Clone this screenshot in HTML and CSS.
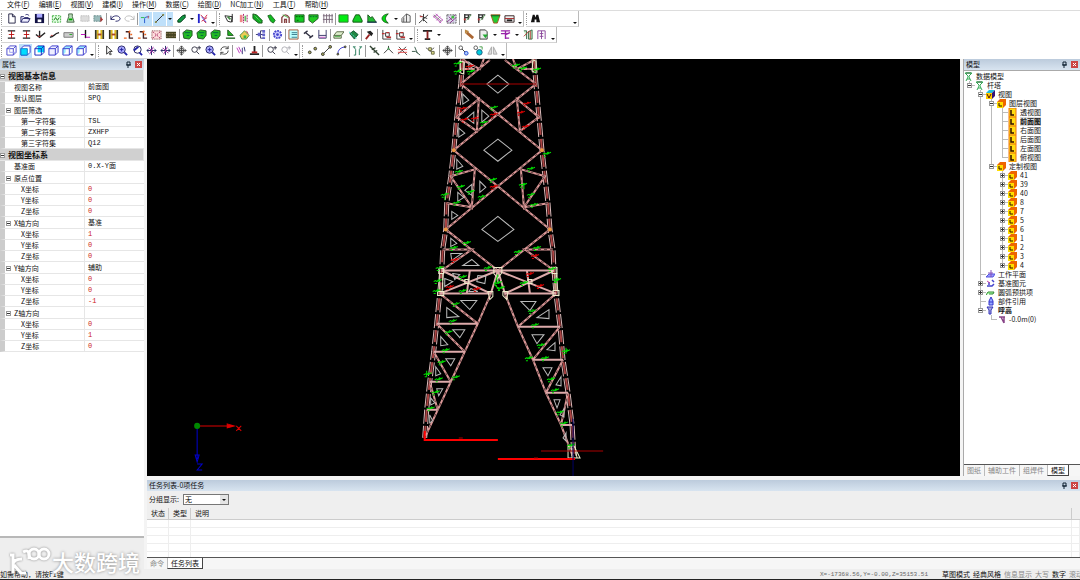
FILE: index.html
```html
<!DOCTYPE html>
<html lang="zh-CN">
<head>
  <meta charset="utf-8">
  <meta name="viewport" content="width=device-width, initial-scale=1.0">
  <title>杆塔 - 前面图</title>
  <link rel="stylesheet" href="styles.css">
</head>
<body>
  <!-- Icon sprite -->
  <svg class="sprite" aria-hidden="true">
    <symbol id="new" viewBox="0 0 12 12"><path d="M3 1h4l3 3v7H3zM7 1v3h3" fill="#fff" stroke="#224" /></symbol>
    <symbol id="open" viewBox="0 0 12 12"><path d="M1 10V4h3l1 1h4v2M1 10l2-4h8l-2 4zM6 2c2-1 3 0 4 1" fill="#eef" stroke="#226" /></symbol>
    <symbol id="save" viewBox="0 0 12 12"><path d="M1 1h10v10H1z" fill="#114" /><path d="M3 1h6v4H3z" fill="#aaf" /><path d="M4 7h4v3H4z" fill="#fff" /></symbol>
    <symbol id="mail" viewBox="0 0 12 12"><path d="M1.500 3h9v7h-9z" fill="#e4ffe4" stroke="#3a3" stroke-dasharray="2 1" /><path d="M3 8l2-3 2 3 2-3" fill="none" stroke="#171" /></symbol>
    <symbol id="weight" viewBox="0 0 12 12"><path d="M4 1h4v3l2 6H2l2-6z" fill="#bdb" stroke="#464" /><path d="M4 7h4" stroke="#0a0" stroke-width="2" /></symbol>
    <symbol id="greybox" viewBox="0 0 12 12"><path d="M2 3h9v6H2z" fill="#ddd" stroke="#aaa" stroke-dasharray="1 1" /></symbol>
    <symbol id="export" viewBox="0 0 12 12"><path d="M1 3h8v6H1z" fill="#9bb" stroke="#688" stroke-dasharray="2 1" /><path d="M8 4l3 3-3 3z" fill="#a33" /></symbol>
    <symbol id="undo" viewBox="0 0 12 12"><path d="M1 3v4h4M1 7c2-5 9-5 10-1 0 2-2 3-5 3" fill="none" stroke="#226" /></symbol>
    <symbol id="redo" viewBox="0 0 12 12"><path d="M11 3v4H7M11 7C9 2 2 2 1 6c0 2 2 3 5 3" fill="none" stroke="#bbb" /></symbol>
    <symbol id="curve" viewBox="0 0 12 12"><path d="M5 11V6q0-2 5-2" fill="none" stroke="#25c" /><path d="M1 5h4" stroke="#2b4" /><path d="M9 3v3" stroke="#c55" /></symbol>
    <symbol id="line" viewBox="0 0 12 12"><path d="M2 10l8-8" stroke="#222" /><path d="M1 9h2v2H1zM9 1h2v2H9z" fill="#884" /></symbol>
    <symbol id="plate" viewBox="0 0 12 12"><path d="M2 8l5-5 3-1v3L5 10H2z" fill="#194" stroke="#031" /></symbol>
    <symbol id="flag" viewBox="0 0 12 12"><path d="M2 1v10" stroke="#22c" stroke-width="2" /><path d="M4 2l4 4 3-4M5 9l6-4M7 8l3 3" fill="none" stroke="#c24" /><path d="M5 4l5 6" stroke="#44d" /></symbol>
    <symbol id="loop" viewBox="0 0 12 12"><path d="M1 3l8 1-1 6-4-1zM9 1v9" fill="none" stroke="#222" /><path d="M4 4l3 3" stroke="#484" stroke-width="2" /></symbol>
    <symbol id="mirror" viewBox="0 0 12 12"><path d="M2 2h3v8H2z" fill="#e88" /><path d="M6 1v10M10 2v8" stroke="#a16" stroke-dasharray="2 1" /><path d="M7 3h2v6H7z" fill="#6b6" /></symbol>
    <symbol id="greenbar" viewBox="0 0 12 12"><path d="M1 1l4 1 6 6v3H7L1 6z" fill="#1a2" stroke="#252" /><path d="M3 3l6 6" stroke="#9e9" stroke-dasharray="1 1" /></symbol>
    <symbol id="greenbolt" viewBox="0 0 12 12"><path d="M2 3l3-1 5 6-2 3-3-2z" fill="#1b2" stroke="#262" /></symbol>
    <symbol id="arch" viewBox="0 0 12 12"><path d="M2 11V5q4-6 8 0v6M5 11V7h2v4" fill="none" stroke="#844" stroke-width="1.500" /><path d="M3 2l6 3" stroke="#4b4" /></symbol>
    <symbol id="greenbox" viewBox="0 0 12 12"><path d="M1 2h10v8H1z" fill="#1c2" stroke="#252" /><path d="M2 4h8M3 8h2" stroke="#050" stroke-dasharray="2 1" /></symbol>
    <symbol id="greenshield" viewBox="0 0 12 12"><path d="M1 2h10v4L5 11 1 8z" fill="#2c2" stroke="#252" /><path d="M2 4h8" stroke="#063" stroke-dasharray="2 1" /></symbol>
    <symbol id="fence" viewBox="0 0 12 12"><path d="M2 1v10M5 1v10M8 1v10M11 1v10M1 3h11M1 7h11" stroke="#767" /></symbol>
    <symbol id="rect" viewBox="0 0 12 12"><path d="M1 2h10v8H1z" fill="#0e1" stroke="#373" /></symbol>
    <symbol id="trap" viewBox="0 0 12 12"><path d="M1 10V8l3-6h4l3 6v2z" fill="#1c2" stroke="#151" /></symbol>
    <symbol id="slope" viewBox="0 0 12 12"><path d="M2 10V2l3 3 2-1 4 6z" fill="#2b3" stroke="#252" /><path d="M1 10h11" stroke="#125" /></symbol>
    <symbol id="moon" viewBox="0 0 12 12"><path d="M9 1C0 2 0 10 9 11 5 8 5 4 9 1z" fill="#0d1" stroke="#151" /></symbol>
    <symbol id="tent" viewBox="0 0 12 12"><path d="M1 10V6l5-5 4 2v7zM6 1v9M3 5v5" fill="#eee" stroke="#555" /></symbol>
    <symbol id="star" viewBox="0 0 12 12"><path d="M1 11l10-9M2 3l8 3M6 1v8M5 6l5 5" stroke="#333" fill="none" /><path d="M2 4h3" stroke="#c33" /></symbol>
    <symbol id="hatch" viewBox="0 0 12 12"><path d="M1 3l9 8M4 1l8 7M2 5l4-4M5 8l4-4M8 11l4-4" stroke="#b5b" fill="none" /><path d="M2 2l8 7" stroke="#777" /></symbol>
    <symbol id="grid" viewBox="0 0 12 12"><path d="M1 2h10v9H1z" fill="#dde" stroke="#555" stroke-dasharray="2 1" /><path d="M1 10l9-8M4 11l7-6M3 4l5 5" stroke="#838" /><path d="M6 3h3v3H6z" fill="#4b4" /></symbol>
    <symbol id="post" viewBox="0 0 12 12"><path d="M3 1v10M3 2h7M3 5h5M7 2v5" stroke="#333" stroke-width="1.500" /><path d="M5 8l5-6" stroke="#595" /><path d="M2 6h2v2H2z" fill="#b33" /></symbol>
    <symbol id="funnel" viewBox="0 0 12 12"><path d="M1 2h10L8 11H4z" fill="#2c3" stroke="#a52" /><path d="M1 3h10" stroke="#152" /></symbol>
    <symbol id="case" viewBox="0 0 12 12"><path d="M1 3h10v7H1z" fill="#eee" stroke="#322" /><path d="M1 6h10" stroke="#a22" /><path d="M3 8h6" stroke="#222" stroke-width="2" /></symbol>
    <symbol id="find" viewBox="0 0 12 12"><path d="M3 2h2l1 3 1-3h2l2 8H7V7H5v3H1z" fill="#111" /></symbol>
    <symbol id="ibeam" viewBox="0 0 12 12"><path d="M2 2h8M2 10h8" stroke="#222" stroke-width="1.500" /><path d="M6 2v8M3 6h6" stroke="#b11" /></symbol>
    <symbol id="column-top" viewBox="0 0 12 12"><path d="M1 2h10M3 11h6" stroke="#222" stroke-width="2" /><path d="M6 2v9" stroke="#822" stroke-width="2" /></symbol>
    <symbol id="check" viewBox="0 0 12 12"><path d="M1 6l4 3 6-5M5 2v6" fill="none" stroke="#222" stroke-width="1.500" /><path d="M3 8h3" stroke="#b33" /></symbol>
    <symbol id="bend" viewBox="0 0 12 12"><path d="M1 9c5 0 4-4 10-5" fill="none" stroke="#222" stroke-width="1.500" /><path d="M2 7h2" stroke="#b33" /></symbol>
    <symbol id="card" viewBox="0 0 12 12"><path d="M1 4h10v5H1z" fill="#ccc" stroke="#777" /><path d="M7 6h3" stroke="#2a2" /></symbol>
    <symbol id="pole" viewBox="0 0 12 12"><path d="M6 1v9" stroke="#111" stroke-width="1.500" /><path d="M1 6h5M6 9h5" stroke="#b0b" /></symbol>
    <symbol id="hframe" viewBox="0 0 12 12"><path d="M2 1v10M10 1v10" stroke="#332" stroke-width="2" /><path d="M4 1v10M8 1v10" stroke="#db2" stroke-width="2" /><path d="M4 6h4" stroke="#a42" stroke-width="2" /></symbol>
    <symbol id="steps" viewBox="0 0 12 12"><path d="M3 3h4v7h4" fill="none" stroke="#422" stroke-width="1.500" /><path d="M1 10h3M6 4l2-2M8 6h2" stroke="#e62" stroke-width="1.500" /></symbol>
    <symbol id="xbox" viewBox="0 0 12 12"><path d="M1 2h10v9H1z" fill="#fdd" stroke="#733" stroke-dasharray="1 1" /><path d="M2 3l8 7M10 3l-8 7" stroke="#a36" stroke-dasharray="2 1" /></symbol>
    <symbol id="brick" viewBox="0 0 12 12"><path d="M1 3h11v7H1z" fill="#442" /><path d="M1 5h11M1 8h11" stroke="#875" stroke-dasharray="2 1" /></symbol>
    <symbol id="part" viewBox="0 0 12 12"><path d="M1 4l4-3 6 1v5l-3 4-6-1z" fill="#2b2" stroke="#252" /><path d="M3 4h6M5 7h3" stroke="#064" /></symbol>
    <symbol id="corner" viewBox="0 0 12 12"><path d="M3 1l6 6H3z" fill="#2b2" stroke="#252" /><path d="M1 10h10" stroke="#262" stroke-width="1.500" /></symbol>
    <symbol id="home" viewBox="0 0 12 12"><path d="M1 7l5-5 5 5-3 4H3z" fill="#ec5" stroke="#484" /><path d="M5 7h3v3H5z" fill="#3b4" /><path d="M8 2l2 3" stroke="#c44" /></symbol>
    <symbol id="nodes" viewBox="0 0 12 12"><path d="M1 6h5M6 2v8M6 2h4M6 6h4M6 10h4" stroke="#336" fill="none" /><path d="M3 4h3v4H3zM8 1h3v3H8zM8 5h3v3H8zM8 9h3v2H8z" fill="#66c" /></symbol>
    <symbol id="gear" viewBox="0 0 12 12"><circle cx="6" cy="6" r="4" fill="#ccf" stroke="#44c" stroke-width="2" stroke-dasharray="2 1" /><circle cx="6" cy="6" r="1.500" fill="#44c" /></symbol>
    <symbol id="sheet" viewBox="0 0 12 12"><path d="M1 1h10v10H1z" fill="#bff" stroke="#a53" /><path d="M4 4h6M4 6h6M4 9h6" stroke="#378" /></symbol>
    <symbol id="dumb" viewBox="0 0 12 12"><path d="M3 4l6 5M1 5l4-3M7 10l4-3" stroke="#334" stroke-width="1.500" /></symbol>
    <symbol id="bracket" viewBox="0 0 12 12"><path d="M2 1v9h8V1M2 7h8" fill="none" stroke="#336" /><path d="M3 9h6" stroke="#c5c" /></symbol>
    <symbol id="slab" viewBox="0 0 12 12"><path d="M1 10V7l3-4h8L9 7v3zM1 7h8" fill="#dec" stroke="#564" /><path d="M2 8h6" stroke="#4a4" /></symbol>
    <symbol id="bolt" viewBox="0 0 12 12"><path d="M2 5l4-3 5 4-4 5z" fill="#284" stroke="#153" /><path d="M1 3l9 8" stroke="#4dc" stroke-dasharray="2 1" /></symbol>
    <symbol id="hammer" viewBox="0 0 12 12"><path d="M3 3l4-1 3 3-2 3z" fill="#222" /><path d="M6 6l-4 5" stroke="#922" stroke-width="2" /></symbol>
    <symbol id="axes" viewBox="0 0 12 12"><path d="M2 1v10h9M5 4h4v4H5z" fill="none" stroke="#333" /><path d="M1 5h3M6 9h5M6 4h3" stroke="#b33" stroke-width="1.500" /></symbol>
    <symbol id="wrench" viewBox="0 0 12 12"><path d="M3 4l7 6" stroke="#a63" stroke-width="3" /><path d="M2 5V2l3 1" fill="none" stroke="#b84" stroke-width="2" /></symbol>
    <symbol id="doc" viewBox="0 0 12 12"><path d="M2 1h6l2 2v8H2z" fill="#eee" stroke="#333" /><path d="M5 6h6l-3 4z" fill="#2a3" /></symbol>
    <symbol id="branch" viewBox="0 0 12 12"><path d="M1 2h10M1 5h6M6 2v9M6 6l5-2M6 10h4" stroke="#92a" fill="none" stroke-width="1.500" /></symbol>
    <symbol id="book" viewBox="0 0 12 12"><path d="M2 2h3v9M7 3l4-2v10H7z" fill="#cec" stroke="#364" /><path d="M2 8l6-6M9 2v9" stroke="#b33" /></symbol>
    <symbol id="column" viewBox="0 0 12 12"><path d="M2 11V2h8v9M6 2v9M4 5h4M4 8h4" fill="none" stroke="#849" /></symbol>
    <symbol id="cube" viewBox="0 0 12 12"><path d="M1 4l3-3h7v7l-3 3H1zM1 4h7v7M8 4l3-3" fill="#eef" stroke="#33c" /></symbol>
    <symbol id="cube-wire" viewBox="0 0 12 12"><path d="M1 4l3-3h7v7l-3 3H1zM1 4h7v7M8 4l3-3" fill="#fff" stroke="#44c" /><path d="M4 1v7h7" fill="none" stroke="#99e" /></symbol>
    <symbol id="cube-front" viewBox="0 0 12 12"><path d="M1 4l3-3h7v7l-3 3H1z" fill="#fff" stroke="#33c" /><path d="M1 4h7v7H1z" fill="#0df" stroke="#17c" /></symbol>
    <symbol id="cube-back" viewBox="0 0 12 12"><path d="M4 1h7v7H4z" fill="#0df" /><path d="M1 4l3-3h7v7l-3 3H1zM1 4h7v7M8 4l3-3" fill="none" stroke="#12b" /></symbol>
    <symbol id="cube-side" viewBox="0 0 12 12"><path d="M1 4l3-3v7l-3 3zM4 1h7l-3 3H1z" fill="#9ef" /><path d="M1 4l3-3h7v7l-3 3H1zM1 4h7v7M8 4l3-3" fill="none" stroke="#33c" /></symbol>
    <symbol id="pointer" viewBox="0 0 12 12"><path d="M4 1v9l2-2 2 3 1-1-2-3h3z" fill="#fff" stroke="#222" /></symbol>
    <symbol id="zoomwin" viewBox="0 0 12 12"><circle cx="5" cy="5" r="4" fill="#aaf" stroke="#226" /><path d="M8 8l3 3" stroke="#22a" stroke-width="2" /><path d="M3 5h4M5 3v4" stroke="#229" /></symbol>
    <symbol id="zoomfit" viewBox="0 0 12 12"><circle cx="6" cy="5" r="4" fill="#fff" stroke="#225" /><path d="M2 6l5-4M8 8l3 3" stroke="#22a" stroke-width="2" /></symbol>
    <symbol id="orbit" viewBox="0 0 12 12"><path d="M6 1v10M1 6h10M3 4L1 6l2 2M9 4l2 2-2 2" fill="none" stroke="#226" /><path d="M3 3l6 6M8 2l-4 8" stroke="#a3a" /></symbol>
    <symbol id="move" viewBox="0 0 12 12"><path d="M6 1v10M1 6h10M4 3l2-2 2 2M4 9l2 2 2-2M3 4L1 6l2 2M9 4l2 2-2 2" fill="none" stroke="#444" /><path d="M4 4h4v4H4z" fill="none" stroke="#444" /></symbol>
    <symbol id="zoom" viewBox="0 0 12 12"><circle cx="5" cy="5" r="3" fill="#fff" stroke="#334" /><path d="M7 7l3 3M8 3h4M10 1v4" stroke="#334" /></symbol>
    <symbol id="rotate" viewBox="0 0 12 12"><path d="M2 6c0-5 7-5 8-2M10 6c0 5-7 5-8 2M10 1v3H7M2 11V8h3" fill="none" stroke="#444" /></symbol>
    <symbol id="probe" viewBox="0 0 12 12"><path d="M2 3l3 6M4 2l3 6" stroke="#b3b" /><path d="M8 3v7M10 2l1 5" stroke="#337" /></symbol>
    <symbol id="stamp" viewBox="0 0 12 12"><path d="M6 1v7M1 10h10" stroke="#222" stroke-width="2" /><path d="M3 8h6" stroke="#b22" stroke-width="2" /></symbol>
    <symbol id="dots" viewBox="0 0 12 12"><circle cx="3" cy="8" r="1.500" fill="#aa5" stroke="#333" /><circle cx="9" cy="4" r="1.500" fill="#aa5" stroke="#333" /></symbol>
    <symbol id="seg" viewBox="0 0 12 12"><path d="M2 10l8-8" stroke="#333" /><circle cx="2" cy="10" r="1.500" fill="#aa5" stroke="#333" /><circle cx="10" cy="2" r="1.500" fill="#aa5" stroke="#333" /></symbol>
    <symbol id="arc" viewBox="0 0 12 12"><path d="M2 10Q2 3 10 2" fill="none" stroke="#33c" /><circle cx="2" cy="10" r="1" fill="#aa5" stroke="#333" /><circle cx="10" cy="2" r="1" fill="#aa5" stroke="#333" /></symbol>
    <symbol id="pair" viewBox="0 0 12 12"><path d="M2 2l2 3v6M10 2L8 5v6M1 2h3M8 2h3M2 11h2" fill="none" stroke="#275" /></symbol>
    <symbol id="snap" viewBox="0 0 12 12"><path d="M1 1l10 10M3 5l4-2M5 8l4-2" stroke="#343" stroke-width="1.500" /></symbol>
    <symbol id="near" viewBox="0 0 12 12"><path d="M1 3l8 6M5 7l5-4" stroke="#555" /><path d="M4 3h3v3H4zM7 7h3v3H7z" fill="#dd8" stroke="#664" /></symbol>
    <symbol id="peak" viewBox="0 0 12 12"><path d="M1 9l5-5 5 5M6 4V1" fill="none" stroke="#333" /><path d="M5 3h2v2H5z" fill="#4a5" /></symbol>
    <symbol id="cross" viewBox="0 0 12 12"><path d="M1 10l9-8M2 2l9 9" stroke="#444" /><path d="M1 5h10M1 8h10" stroke="#d44" /></symbol>
    <symbol id="tick" viewBox="0 0 12 12"><path d="M1 7h4l5 4M4 2l3 7" fill="none" stroke="#354" /></symbol>
    <symbol id="link" viewBox="0 0 12 12"><path d="M3 3l6 6" stroke="#333" /><circle cx="3" cy="3" r="2" fill="#fff" stroke="#555" /><circle cx="9" cy="9" r="2" fill="#acf" stroke="#24c" /></symbol>
    <symbol id="links" viewBox="0 0 12 12"><circle cx="3" cy="3" r="2" fill="#fff" stroke="#555" /><circle cx="7" cy="8" r="3" fill="#0cd" stroke="#257" /><path d="M7 2h3v3" fill="none" stroke="#494" /></symbol>
    <symbol id="flip" viewBox="0 0 12 12"><path d="M5 2v8H1zM7 2v8h4z" fill="#ddd" stroke="#aaa" /></symbol>
    <symbol id="layer" viewBox="0 0 9 9"><path d="M0 3l3-3h6v6L6 9H0z" fill="#e60" /><path d="M0 3h6v6H0z" fill="#fd0" /><path d="M2 4v3h3" fill="none" stroke="#310" /></symbol>
    <symbol id="leaf" viewBox="0 0 9 9"><path d="M1 0h7v9H1z" fill="#fd1" stroke="#e71" /><path d="M3 2v5h3" fill="none" stroke="#310" stroke-width="1.500" /></symbol>
    <symbol id="views" viewBox="0 0 9 9"><path d="M0 3l3-3h6L6 3z" fill="#2bd" /><path d="M6 3l3-3v6L6 9z" fill="#317" /><path d="M0 3h6v6H0z" fill="#fc0" /><path d="M1 4l2 4 2-4" fill="none" stroke="#511" /></symbol>
    <symbol id="tower" viewBox="0 0 9 9"><path d="M1 1h7L5 4v1l2 4M1 1l3 3v1L2 9M3 7h3" fill="none" stroke="#3a5" /><path d="M2 1h5" stroke="#263" /></symbol>
    <symbol id="plane" viewBox="0 0 9 9"><path d="M0 7l3-3h6L7 7z" fill="#99f" stroke="#55d" /><path d="M5 0v7M2 3h5" stroke="#85b" /></symbol>
    <symbol id="prim" viewBox="0 0 9 9"><path d="M1 7h5l2-2M3 3v3M6 1l2 2" stroke="#44c" fill="none" stroke-width="1.500" /><path d="M1 2l3 2" stroke="#c4a" /></symbol>
    <symbol id="pre" viewBox="0 0 9 9"><path d="M0 7l2-3h6L7 6H3" fill="#afa" stroke="#383" /></symbol>
    <symbol id="ref" viewBox="0 0 9 9"><path d="M3 8V4l2-4 2 4v4zM3 5h4" fill="#9af" stroke="#33c" /></symbol>
    <symbol id="height" viewBox="0 0 9 9"><path d="M1 1h6L5 4v4H3V4z" fill="#aad" stroke="#33b" /></symbol>
    <symbol id="legs" viewBox="0 0 9 9"><path d="M2 2h6M4 2l3 6M7 2v6" fill="none" stroke="#848" stroke-width="1.500" /></symbol>
    <symbol id="pin" viewBox="0 0 7 7"><path d="M2 1h3v3H2zM1 4h5M3 4v3" fill="none" stroke="#123" /></symbol>
    <symbol id="close" viewBox="0 0 7 7"><path d="M0 0h7v7H0z" fill="#c44" /><path d="M2 2l3 3M5 2L2 5" stroke="#fff" /></symbol>
  </svg>

  <nav class="menubar">
    <button>文件(<u>F</u>)</button>
    <button>编辑(<u>E</u>)</button>
    <button>视图(<u>V</u>)</button>
    <button>建模(<u>I</u>)</button>
    <button>操作(<u>M</u>)</button>
    <button>数据(<u>C</u>)</button>
    <button>绘图(<u>D</u>)</button>
    <button>NC加工(<u>N</u>)</button>
    <button>工具(<u>T</u>)</button>
    <button>帮助(<u>H</u>)</button>
  </nav>

  <div class="toolbars">
    <div class="toolbar-row">
      <div class="bar bar-file">
        <i class="grip"></i>
        <button class="tool" aria-label="新建"><svg><use href="#new"/></svg></button>
        <button class="tool" aria-label="打开"><svg><use href="#open"/></svg></button>
        <button class="tool" aria-label="保存"><svg><use href="#save"/></svg></button>
        <i class="sep"></i>
        <button class="tool" aria-label="校核"><svg><use href="#mail"/></svg></button>
        <button class="tool" aria-label="重量"><svg><use href="#weight"/></svg></button>
        <button class="tool" aria-label="清单"><svg><use href="#greybox"/></svg></button>
        <button class="tool" aria-label="导出"><svg><use href="#export"/></svg></button>
        <i class="sep"></i>
        <button class="tool" aria-label="撤销"><svg><use href="#undo"/></svg></button>
        <button class="tool" aria-label="重做"><svg><use href="#redo"/></svg></button>
        <i class="sep"></i>
        <button class="tool on" aria-label="曲线"><svg><use href="#curve"/></svg></button>
        <button class="tool on" aria-label="直线"><svg><use href="#line"/></svg></button>
        <button class="drop on" aria-label="更多线"></button>
        <button class="tool" aria-label="板"><svg><use href="#plate"/></svg></button>
        <button class="drop" aria-label="更多板"></button>
        <button class="tool" aria-label="标记"><svg><use href="#flag"/></svg></button>
        <button class="drop low" aria-label="选项"></button>
      </div>
      <div class="bar bar-model">
        <i class="grip"></i>
        <button class="tool" aria-label="环"><svg><use href="#loop"/></svg></button>
        <button class="tool" aria-label="镜像"><svg><use href="#mirror"/></svg></button>
        <button class="tool" aria-label="角钢"><svg><use href="#greenbar"/></svg></button>
        <button class="tool" aria-label="短角钢"><svg><use href="#greenbolt"/></svg></button>
        <button class="tool" aria-label="拱"><svg><use href="#arch"/></svg></button>
        <button class="tool" aria-label="钢板"><svg><use href="#greenbox"/></svg></button>
        <button class="tool" aria-label="节点板"><svg><use href="#greenshield"/></svg></button>
        <button class="tool" aria-label="栅格"><svg><use href="#fence"/></svg></button>
        <i class="sep"></i>
        <button class="tool" aria-label="矩形"><svg><use href="#rect"/></svg></button>
        <button class="tool" aria-label="梯形"><svg><use href="#trap"/></svg></button>
        <button class="tool" aria-label="斜面"><svg><use href="#slope"/></svg></button>
        <button class="tool" aria-label="弧板"><svg><use href="#moon"/></svg></button>
        <button class="drop" aria-label="更多弧板"></button>
        <button class="tool" aria-label="棱台"><svg><use href="#tent"/></svg></button>
        <i class="sep"></i>
        <button class="tool" aria-label="交点"><svg><use href="#star"/></svg></button>
        <button class="tool" aria-label="剖面"><svg><use href="#hatch"/></svg></button>
        <button class="tool" aria-label="网格"><svg><use href="#grid"/></svg></button>
        <i class="sep"></i>
        <button class="tool" aria-label="立柱"><svg><use href="#post"/></svg></button>
        <button class="tool" aria-label="支架"><svg><use href="#post"/></svg></button>
        <button class="tool" aria-label="漏斗"><svg><use href="#funnel"/></svg></button>
        <button class="tool" aria-label="工具箱"><svg><use href="#case"/></svg></button>
        <button class="drop low" aria-label="选项"></button>
      </div>
      <div class="bar bar-find">
        <i class="grip"></i>
        <button class="tool" aria-label="查找"><svg><use href="#find"/></svg></button>
        <button class="drop low" aria-label="选项"></button>
      </div>
    </div>

    <div class="toolbar-row">
      <div class="bar bar-edit">
        <i class="grip"></i>
        <button class="tool" aria-label="工字"><svg><use href="#ibeam"/></svg></button>
        <button class="tool" aria-label="工字底"><svg><use href="#ibeam"/></svg></button>
        <button class="tool" aria-label="定位"><svg><use href="#check"/></svg></button>
        <button class="tool" aria-label="弯曲"><svg><use href="#bend"/></svg></button>
        <button class="tool" aria-label="卡片"><svg><use href="#card"/></svg></button>
        <i class="sep"></i>
        <button class="tool" aria-label="杆"><svg><use href="#pole"/></svg></button>
        <button class="tool" aria-label="连接"><svg><use href="#hframe"/></svg></button>
        <button class="tool" aria-label="断开"><svg><use href="#hframe"/></svg></button>
        <button class="tool" aria-label="上移"><svg><use href="#steps"/></svg></button>
        <button class="tool" aria-label="下移"><svg><use href="#steps"/></svg></button>
        <button class="tool" aria-label="删除块"><svg><use href="#xbox"/></svg></button>
        <button class="tool" aria-label="基础"><svg><use href="#brick"/></svg></button>
        <i class="sep"></i>
        <button class="tool" aria-label="零件一"><svg><use href="#part"/></svg></button>
        <button class="tool" aria-label="零件二"><svg><use href="#part"/></svg></button>
        <button class="tool" aria-label="零件三"><svg><use href="#part"/></svg></button>
        <button class="tool" aria-label="切角"><svg><use href="#corner"/></svg></button>
        <button class="tool" aria-label="装配"><svg><use href="#home"/></svg></button>
        <i class="sep"></i>
        <button class="tool" aria-label="结构"><svg><use href="#nodes"/></svg></button>
        <i class="sep"></i>
        <button class="tool" aria-label="设置"><svg><use href="#gear"/></svg></button>
        <i class="sep"></i>
        <button class="tool" aria-label="表格"><svg><use href="#sheet"/></svg></button>
        <button class="tool" aria-label="距离"><svg><use href="#dumb"/></svg></button>
        <button class="tool" aria-label="尺寸"><svg><use href="#bracket"/></svg></button>
        <i class="sep"></i>
        <button class="tool" aria-label="平板"><svg><use href="#slab"/></svg></button>
        <button class="tool" aria-label="螺栓"><svg><use href="#bolt"/></svg></button>
        <i class="sep"></i>
        <button class="tool" aria-label="锤"><svg><use href="#hammer"/></svg></button>
        <i class="sep"></i>
        <button class="tool" aria-label="坐标一"><svg><use href="#axes"/></svg></button>
        <button class="tool" aria-label="坐标二"><svg><use href="#axes"/></svg></button>
        <button class="drop low" aria-label="选项"></button>
      </div>
      <div class="bar bar-part">
        <i class="grip"></i>
        <button class="tool" aria-label="型钢"><svg><use href="#column-top"/></svg></button>
        <button class="drop" aria-label="更多型钢"></button>
        <i class="blank"></i>
        <i class="sep"></i>
        <button class="tool" aria-label="扳手"><svg><use href="#wrench"/></svg></button>
        <button class="tool" aria-label="文档"><svg><use href="#doc"/></svg></button>
        <button class="drop" aria-label="更多文档"></button>
        <button class="tool" aria-label="分支"><svg><use href="#branch"/></svg></button>
        <button class="drop" aria-label="更多分支"></button>
        <button class="tool" aria-label="图册"><svg><use href="#book"/></svg></button>
        <button class="tool" aria-label="柱"><svg><use href="#column"/></svg></button>
        <button class="drop low" aria-label="选项"></button>
      </div>
    </div>

    <div class="toolbar-row">
      <div class="bar bar-view">
        <i class="grip"></i>
        <button class="tool" aria-label="透视"><svg><use href="#cube-wire"/></svg></button>
        <button class="tool on" aria-label="前面"><svg><use href="#cube-front"/></svg></button>
        <button class="tool" aria-label="后面"><svg><use href="#cube-back"/></svg></button>
        <button class="tool" aria-label="左面"><svg><use href="#cube"/></svg></button>
        <button class="tool" aria-label="右面"><svg><use href="#cube-side"/></svg></button>
        <button class="tool" aria-label="俯视"><svg><use href="#cube-side"/></svg></button>
        <button class="drop low" aria-label="选项"></button>
      </div>
      <div class="bar bar-zoom">
        <i class="grip"></i>
        <button class="tool" aria-label="选择"><svg><use href="#pointer"/></svg></button>
        <button class="tool" aria-label="窗口缩放"><svg><use href="#zoomwin"/></svg></button>
        <button class="tool" aria-label="全部缩放"><svg><use href="#zoomfit"/></svg></button>
        <button class="tool" aria-label="环绕一"><svg><use href="#orbit"/></svg></button>
        <button class="tool" aria-label="环绕二"><svg><use href="#orbit"/></svg></button>
        <i class="sep"></i>
        <button class="tool" aria-label="平移"><svg><use href="#move"/></svg></button>
        <button class="tool" aria-label="缩放"><svg><use href="#zoom"/></svg></button>
        <button class="tool" aria-label="放大"><svg><use href="#zoomwin"/></svg></button>
        <button class="tool" aria-label="旋转"><svg><use href="#rotate"/></svg></button>
        <i class="sep"></i>
        <button class="tool" aria-label="测量"><svg><use href="#probe"/></svg></button>
        <button class="tool" aria-label="基准"><svg><use href="#stamp"/></svg></button>
        <i class="sep"></i>
        <button class="tool" aria-label="上一视图"><svg><use href="#zoom"/></svg></button>
        <button class="tool off" aria-label="下一视图"><svg><use href="#zoom"/></svg></button>
        <button class="drop low" aria-label="选项"></button>
      </div>
      <div class="bar bar-snap">
        <i class="grip"></i>
        <button class="tool" aria-label="点"><svg><use href="#dots"/></svg></button>
        <button class="tool" aria-label="线段"><svg><use href="#seg"/></svg></button>
        <button class="tool" aria-label="圆弧"><svg><use href="#arc"/></svg></button>
        <i class="sep"></i>
        <button class="tool" aria-label="对称"><svg><use href="#pair"/></svg></button>
        <i class="sep"></i>
        <button class="tool" aria-label="捕捉"><svg><use href="#snap"/></svg></button>
        <button class="tool" aria-label="顶点"><svg><use href="#peak"/></svg></button>
        <button class="tool" aria-label="相交"><svg><use href="#cross"/></svg></button>
        <button class="tool" aria-label="垂足"><svg><use href="#tick"/></svg></button>
        <button class="tool" aria-label="最近点"><svg><use href="#near"/></svg></button>
        <i class="sep"></i>
        <button class="tool" aria-label="移动"><svg><use href="#move"/></svg></button>
        <i class="sep"></i>
        <button class="tool" aria-label="关联"><svg><use href="#link"/></svg></button>
        <button class="tool" aria-label="复制关联"><svg><use href="#links"/></svg></button>
        <button class="tool" aria-label="翻转"><svg><use href="#flip"/></svg></button>
        <button class="drop low" aria-label="选项"></button>
      </div>
    </div>
  </div>

  <main class="workspace">
    <aside class="props">
      <header class="panel-title">
        <span>属性</span>
        <button class="mini" aria-label="固定属性"><svg><use href="#pin"/></svg></button>
        <button class="mini" aria-label="关闭属性"><svg><use href="#close"/></svg></button>
      </header>
      <div class="props-body">
        <table class="prop-table">
          <colgroup><col class="col-name"><col></colgroup>
          <tr class="category"><th colspan="2"><i class="box"></i>视图基本信息</th></tr>
          <tr><th>视图名称</th><td>前面图</td></tr>
          <tr><th>默认图层</th><td>SPQ</td></tr>
          <tr class="group"><th><i class="box"></i>图层筛选</th><td></td></tr>
          <tr class="sub"><th>第一字符集</th><td>TSL</td></tr>
          <tr class="sub"><th>第二字符集</th><td>ZXHFP</td></tr>
          <tr class="sub"><th>第三字符集</th><td>Q12</td></tr>
          <tr class="category"><th colspan="2"><i class="box"></i>视图坐标系</th></tr>
          <tr><th>基准面</th><td>0.X-Y面</td></tr>
          <tr class="group"><th><i class="box"></i>原点位置</th><td></td></tr>
          <tr class="sub"><th>X坐标</th><td class="num">0</td></tr>
          <tr class="sub"><th>Y坐标</th><td class="num">0</td></tr>
          <tr class="sub"><th>Z坐标</th><td class="num">0</td></tr>
          <tr class="group"><th><i class="box"></i>X轴方向</th><td>基准</td></tr>
          <tr class="sub"><th>X坐标</th><td class="num">1</td></tr>
          <tr class="sub"><th>Y坐标</th><td class="num">0</td></tr>
          <tr class="sub"><th>Z坐标</th><td class="num">0</td></tr>
          <tr class="group"><th><i class="box"></i>Y轴方向</th><td>辅助</td></tr>
          <tr class="sub"><th>X坐标</th><td class="num">0</td></tr>
          <tr class="sub"><th>Y坐标</th><td class="num">0</td></tr>
          <tr class="sub"><th>Z坐标</th><td class="num">-1</td></tr>
          <tr class="group"><th><i class="box"></i>Z轴方向</th><td></td></tr>
          <tr class="sub"><th>X坐标</th><td class="num">0</td></tr>
          <tr class="sub"><th>Y坐标</th><td class="num">1</td></tr>
          <tr class="sub"><th>Z坐标</th><td class="num">0</td></tr>
        </table>
      </div>
      <footer class="watermark">
        <svg viewBox="0 0 44 30" aria-hidden="true">
          <path d="M2 9h3v18M5 18q1-5 9-5M6 19l7 8h5M15 6q6-3 6 3v4" />
          <circle cx="26" cy="8" r="5" />
          <circle cx="36" cy="8" r="5" />
        </svg>
        <span>大数跨境</span>
      </footer>
    </aside>

    <div class="center">
      <div class="upper">
        <svg class="canvas" viewBox="147 59 813 416" preserveAspectRatio="xMidYMid slice">
          <defs>
            <path id="g" d="M-4 1l2-1 1 1 2-2 1 1 2-1M-3 3h2M0 1l2-1" />
            <path id="main-legs" d="M463 59L461 84 457 117 454 150 451 176 447 203 446 229 443 249 442 270 440 293 437 323 434 351 430 381 427 409 425 437M534 59L536 84 539 117 542 150 545 176 548 203 550 229 553 249 554 270 556 293 560 326 563 359 568 392 572 424 574 457" />
            <g id="bracing">
              <path d="M461 84L490 60M536 84L505 60M461 84L498 114 542 150M536 84L498 114 454 150M454 150L498 186 550 229 498 270M542 150L498 186 446 229 498 270" />
              <path d="M463 60l17 9 4-10M534 60l-17 9-4-10M462 69h13M521 69h13M457 117l22-18-2 32zM539 117l-22-18 3 32z" />
              <path d="M451 176l24-7-3 38zM447 203l25 4M545 176l-24-7 3 38zM548 203l-24 4" />
              <path d="M443 249h29L442 270M553 249h-28l29 21" />
              <path d="M491 293l-13 30-13 28-14 30-13 28-13 28M505 293l13 33 15 33 13 33 15 32 12 32" />
              <path d="M440 293l38 30M437 323l28 28M434 351l17 30M430 381l8 28M556 293l-38 33M560 326l-27 33M563 359l-17 33M568 392l-7 32" />
            </g>
          </defs>

          <!-- main legs -->
          <use href="#main-legs" class="leg" />
          <use href="#main-legs" class="leg-gap" />
          <use href="#main-legs" class="leg-core" />

          <!-- bracing -->
          <use href="#bracing" class="brace" />
          <use href="#bracing" class="brace-core" />
          <g class="strut">
            <path d="M442 270h112M440 293h51M505 293h51M437 323h41M434 351h31M430 381h21M427 409h11M518 326h42M533 359h30M546 392h22M561 424h11" />
            <path d="M442 270l49 23M440 293l58-23M554 270l-49 23M556 293l-58-23M470 270l-3 23M527 270l3 23M498 270l-7 23M498 270l7 23" />
          </g>

          <!-- plates and openings -->
          <g class="outline">
            <path d="M498 75l11 9-11 9-11-9zM498 139l14 11-14 11-14-11zM498 216l16 13-16 12-16-12z" />
            <path d="M463 94v10l6-4zM459 128v9l6-4zM467 118l7-6v11zM482 110v12l7-6zM480 181v11l6-5zM465 190l7-6v11zM457 159v10l6-3zM458 192v9l6-4zM469 62v7l5-3zM452 211v8l6-4zM451 238v8l6-3z" />
            <path d="M451 253h11l-10 7zM472 259l-9 6h16zM478 275l8 1-1 7-8-2zM445 278v8l8-5zM471 288l7 3h-9zM453 273l7 1-5 5z" />
            <path d="M461 300h16l-7 9zM447 307v10l12-1zM453 329h12l-5 8zM441 336v9l7-1zM446 358h9l-4 7zM436 366v9l5-2zM437 388h6l-4 7zM431 397v7l4-2zM430 414v8l3-2z" />
            <path d="M521 301h15l-6 9zM549 309v9l-12-1zM532 334h12l-7 9zM555 342v8l-8-1zM543 367h9l-4 8zM561 376v9l-5-1zM554 399h6l-3 8zM564 408v8l-4-2zM566 432v8l-3-3z" />
          </g>

          <g class="joints">
            <circle cx="454" cy="150" r="1" /><circle cx="542" cy="150" r="1" />
            <circle cx="446" cy="229" r="1" /><circle cx="550" cy="229" r="1" />
          </g>
          <g class="plates">
            <path d="M494 267h8v5l-4 6-4-5zM439 268h5v5h-5zM552 267h5v6h-5zM438 291h6v4h-6zM553 290h6v5h-6zM488 291h5v5l-3 3zM503 291h5l-1 8-4-4zM465 279h4v4h-4zM528 279h4v4h-4z" />
            <path d="M460 61l4 1v12l-3-1zM533 60l3 1v12l-4-2zM568 445h6l6 12h-12zM572 447v10M575 447l2 10" />
            <path d="M440 273v17M443 273v17M555 273v17M557 273v17M498 274v8" />
          </g>

          <!-- part marks -->
          <g class="mark-green">
            <use href="#g" x="458" y="63" /><use href="#g" x="458" y="71" /><use href="#g" x="471" y="71" /><use href="#g" x="516" y="65" /><use href="#g" x="537" y="69" /><use href="#g" x="523" y="68" />
            <use href="#g" x="494" y="107" /><use href="#g" x="484" y="122" /><use href="#g" x="547" y="153" /><use href="#g" x="459" y="171" /><use href="#g" x="531" y="168" />
            <use href="#g" x="493" y="179" /><use href="#g" x="461" y="186" /><use href="#g" x="471" y="191" /><use href="#g" x="482" y="196" /><use href="#g" x="523" y="184" /><use href="#g" x="531" y="194" />
            <use href="#g" x="445" y="194" /><use href="#g" x="457" y="202" /><use href="#g" x="534" y="204" /><use href="#g" x="467" y="242" /><use href="#g" x="454" y="247" /><use href="#g" x="518" y="251" /><use href="#g" x="537" y="247" />
            <use href="#g" x="440" y="267" /><use href="#g" x="438" y="280" /><use href="#g" x="437" y="290" /><use href="#g" x="463" y="276" /><use href="#g" x="463" y="290" /><use href="#g" x="488" y="267" /><use href="#g" x="498" y="282" /><use href="#g" x="501" y="287" /><use href="#g" x="524" y="282" /><use href="#g" x="552" y="268" /><use href="#g" x="557" y="279" />
            <use href="#g" x="456" y="303" /><use href="#g" x="453" y="320" /><use href="#g" x="449" y="331" /><use href="#g" x="446" y="349" /><use href="#g" x="442" y="361" /><use href="#g" x="439" y="378" /><use href="#g" x="428" y="373" /><use href="#g" x="456" y="376" /><use href="#g" x="436" y="391" /><use href="#g" x="431" y="407" />
            <use href="#g" x="532" y="310" /><use href="#g" x="535" y="324" /><use href="#g" x="541" y="344" /><use href="#g" x="566" y="350" /><use href="#g" x="529" y="357" /><use href="#g" x="545" y="357" /><use href="#g" x="551" y="378" /><use href="#g" x="555" y="389" /><use href="#g" x="560" y="411" /><use href="#g" x="564" y="422" /><use href="#g" x="571" y="444" />
          </g>
          <path class="rod" d="M498 274l-3 10 5 6M445 196v4M524 184v5M566 347v6M427 370v6M556 277v6" />
          <g class="mark-red">
            <use href="#g" x="470" y="66" /><use href="#g" x="463" y="108" /><use href="#g" x="465" y="119" /><use href="#g" x="475" y="118" /><use href="#g" x="527" y="103" /><use href="#g" x="521" y="112" /><use href="#g" x="526" y="126" />
            <use href="#g" x="494" y="114" /><use href="#g" x="494" y="186" /><use href="#g" x="535" y="255" /><use href="#g" x="455" y="259" /><use href="#g" x="450" y="286" /><use href="#g" x="477" y="288" /><use href="#g" x="530" y="273" /><use href="#g" x="540" y="285" />
          </g>

          <!-- section marks -->
          <path class="beam" d="M461 84h75M541 450h62" />
          <path class="base" d="M424 439h74M498 458h77M425 430v8" />
          <path class="beam" d="M459 437h4M534 457h4" />
          <path class="guide" d="M573 418v57" />

          <!-- ucs -->
          <path class="ucs-x" d="M198 425h36M228 423l7 2-7 2zM237 425l5 5M242 425l-5 5" />
          <path class="ucs-z" d="M198 425v33M196 454l2 7 2-7zM198 463h5l-5 6h5" />
          <circle class="ucs-o" cx="198" cy="425" r="3" />
        </svg>

        <aside class="model">
          <header class="panel-title">
            <span>模型</span>
            <button class="mini" aria-label="固定模型"><svg><use href="#pin"/></svg></button>
            <button class="mini" aria-label="关闭模型"><svg><use href="#close"/></svg></button>
          </header>
          <div class="tree">
            <div class="node root"><svg><use href="#tower"/></svg>数据模型</div>
            <ul>
              <li><div class="node"><i class="box"></i><svg><use href="#tower"/></svg>杆塔</div>
                <ul>
                  <li><div class="node"><i class="box"></i><svg><use href="#views"/></svg>视图</div>
                    <ul>
                      <li><div class="node"><i class="box"></i><svg><use href="#layer"/></svg>图层视图</div>
                        <ul>
                          <li><div class="node"><i></i><svg><use href="#leaf"/></svg>透视图</div></li>
                          <li><div class="node"><i></i><svg><use href="#leaf"/></svg><b class="current">前面图</b></div></li>
                          <li><div class="node"><i></i><svg><use href="#leaf"/></svg>右面图</div></li>
                          <li><div class="node"><i></i><svg><use href="#leaf"/></svg>后面图</div></li>
                          <li><div class="node"><i></i><svg><use href="#leaf"/></svg>左面图</div></li>
                          <li><div class="node"><i></i><svg><use href="#leaf"/></svg>俯视图</div></li>
                        </ul>
                      </li>
                      <li><div class="node"><i class="box"></i><svg><use href="#layer"/></svg>定制视图</div>
                        <ul>
                          <li><div class="node"><i class="box plus"></i><svg><use href="#layer"/></svg>41</div></li>
                          <li><div class="node"><i class="box plus"></i><svg><use href="#layer"/></svg>39</div></li>
                          <li><div class="node"><i class="box plus"></i><svg><use href="#layer"/></svg>40</div></li>
                          <li><div class="node"><i class="box plus"></i><svg><use href="#layer"/></svg>8</div></li>
                          <li><div class="node"><i class="box plus"></i><svg><use href="#layer"/></svg>7</div></li>
                          <li><div class="node"><i class="box plus"></i><svg><use href="#layer"/></svg>5</div></li>
                          <li><div class="node"><i class="box plus"></i><svg><use href="#layer"/></svg>6</div></li>
                          <li><div class="node"><i class="box plus"></i><svg><use href="#layer"/></svg>1</div></li>
                          <li><div class="node"><i class="box plus"></i><svg><use href="#layer"/></svg>2</div></li>
                          <li><div class="node"><i class="box plus"></i><svg><use href="#layer"/></svg>3</div></li>
                          <li><div class="node"><i class="box plus"></i><svg><use href="#layer"/></svg>4</div></li>
                        </ul>
                      </li>
                    </ul>
                  </li>
                  <li><div class="node"><i></i><svg><use href="#plane"/></svg>工作平面</div></li>
                  <li><div class="node"><i class="box plus"></i><svg><use href="#prim"/></svg>基准图元</div></li>
                  <li><div class="node"><i class="box plus"></i><svg><use href="#pre"/></svg>圆弧预拱项</div></li>
                  <li><div class="node"><i></i><svg><use href="#ref"/></svg>部件引用</div></li>
                  <li><div class="node"><i class="box"></i><svg><use href="#height"/></svg><b>呼高</b></div>
                    <ul>
                      <li><div class="node"><i></i><svg><use href="#legs"/></svg>-0.0m(0)</div></li>
                    </ul>
                  </li>
                </ul>
              </li>
            </ul>
          </div>
          <div class="tabs">
            <button>图纸</button>
            <button>辅助工件</button>
            <button>组焊件</button>
            <button class="active">模型</button>
          </div>
        </aside>
      </div>

      <section class="tasks">
        <header class="panel-title">
          <span>任务列表-0项任务</span>
          <button class="mini" aria-label="固定任务列表"><svg><use href="#pin"/></svg></button>
          <button class="mini" aria-label="关闭任务列表"><svg><use href="#close"/></svg></button>
        </header>
        <div class="filter">
          <label for="grouping">分组显示:</label>
          <span class="select">
            <select id="grouping"><option>无</option></select>
          </span>
        </div>
        <table class="task-table">
          <thead><tr><th>状态</th><th>类型</th><th>说明</th><th></th></tr></thead>
          <tbody>
            <tr><td></td><td></td><td></td><td></td></tr>
            <tr><td></td><td></td><td></td><td></td></tr>
            <tr><td></td><td></td><td></td><td></td></tr>
            <tr><td></td><td></td><td></td><td></td></tr>
            <tr class="partial"><td></td><td></td><td></td><td></td></tr>
          </tbody>
        </table>
        <div class="tabs">
          <button>命令</button>
          <button class="active">任务列表</button>
        </div>
      </section>
    </div>
  </main>

  <footer class="status">
    <span class="help">如需帮助，请按F1键</span>
    <span class="coords">X=-17368.56,Y=-0.00,Z=35153.51</span>
    <span>草图模式</span>
    <span>经典风格</span>
    <span class="dim">信息显示</span>
    <span class="dim">大写</span>
    <span>数字</span>
    <span class="dim last">滚动</span>
  </footer>
</body>
</html>
```

FILE: styles.css
```css
*, *::before, *::after {
  box-sizing: border-box;
  margin: 0;
  padding: 0;
}

body {
  font-family: "Noto Sans CJK SC", sans-serif;
  font-size: 7px;
  line-height: 9px;
  color: #111;
  background: #fff;
  height: 100vh;
  display: flex;
  flex-direction: column;
  overflow: hidden;
}

button {
  font: inherit;
  color: inherit;
  background: none;
  border: none;
}

svg {
  display: block;
  flex: none;
}

.sprite {
  display: none;
}

/* Menu */
.menubar {
  display: flex;
  gap: 9px;
  padding: 0 7px;
  height: 11px;
  border-bottom: 1px solid #ddd;
  white-space: nowrap;
}

.menubar button {
  height: 9px;
}

/* Toolbars */
.toolbar-row {
  display: flex;
  gap: 2px;
  padding-left: 1px;
  height: 16px;
}

.bar {
  display: flex;
  align-items: center;
  justify-content: space-between;
  border-right: 1px solid #bbb;
  border-bottom: 1px solid #d4d4d4;
}

.bar-file { width: 216px; }
.bar-model { width: 305px; }
.bar-find { width: 53px; justify-content: flex-start; }
.bar-edit { width: 414px; }
.bar-part { width: 140px; }
.bar-view { width: 95px; }
.bar-zoom { width: 202px; }
.bar-snap { width: 205px; }

.bar-find .drop {
  margin-left: auto;
}

.grip {
  width: 3px;
  height: 12px;
  border-left: 1px dotted #999;
}

.sep {
  width: 1px;
  height: 12px;
  background: #999;
}

.blank {
  width: 16px;
}

.tool {
  width: 13px;
  height: 14px;
  display: flex;
  align-items: center;
  justify-content: center;
}

.tool svg {
  width: 11px;
  height: 11px;
}

.on {
  background: #bfe0fa;
}

.off {
  opacity: 0.4;
}

.drop {
  width: 6px;
  height: 14px;
  display: flex;
  align-items: center;
  justify-content: center;
}

.drop::after {
  content: "";
  border: 2px solid transparent;
  border-top-color: #111;
  border-bottom: none;
}

.drop.low {
  align-items: flex-end;
  padding-bottom: 2px;
}

/* Panels */
.workspace {
  flex: 1;
  min-height: 0;
  display: flex;
  gap: 3px;
  background: #f4f4f4;
}

.panel-title {
  display: flex;
  align-items: center;
  gap: 3px;
  height: 11px;
  padding: 0 2px;
  background: linear-gradient(#bccbdc, #d8e4f0);
}

.panel-title span {
  flex: 1;
}

.mini,
.mini svg {
  width: 7px;
  height: 7px;
}

.box {
  flex: none;
  display: inline-block;
  width: 5px;
  height: 5px;
  border: 1px solid #999;
  background: linear-gradient(#333, #333) center / 3px 1px no-repeat #fff;
}

.box.plus {
  background: linear-gradient(#333, #333) center / 3px 1px no-repeat,
    linear-gradient(#333, #333) center / 1px 3px no-repeat #fff;
}

/* Properties */
.props {
  width: 144px;
  display: flex;
  flex-direction: column;
}

.props-body {
  flex: 1;
  background: #fff;
  border-bottom: 2px solid #b8b8b8;
}

.prop-table {
  width: 100%;
  table-layout: fixed;
  border-spacing: 0;
  line-height: 8px;
}

.col-name {
  width: 85px;
}

.prop-table tr {
  height: 11px;
}

.prop-table th,
.prop-table td {
  border-bottom: 1px solid #e6e6e6;
  vertical-align: middle;
  font-weight: normal;
  text-align: left;
  white-space: nowrap;
}

.prop-table th {
  padding-left: 9px;
  border-left: 5px solid #ccc;
  border-right: 1px solid #e6e6e6;
}

.prop-table td {
  padding-left: 3px;
  font-family: "Liberation Mono", "Noto Sans CJK SC", monospace;
}

.prop-table td.num {
  color: #c22;
}

.prop-table .sub th {
  padding-left: 16px;
}

.prop-table .group,
.prop-table .category {
  height: 12px;
}

.prop-table .group th {
  padding-left: 1px;
}

.prop-table .box {
  margin-right: 3px;
}

.prop-table .category th {
  padding-left: 0;
  border-left: none;
  background: #d0d0d0;
  font-size: 8px;
  font-weight: bold;
}

/* Hangs over the top edge of the status bar */
.watermark {
  position: relative;
  z-index: 1;
  display: flex;
  align-items: center;
  height: 31px;
  padding: 14px 0 0 8px;
  color: #fff;
  background: #eee;
  font-size: 22px;
  line-height: 30px;
  font-weight: 500;
  text-shadow: 0 0 3px #888;
  white-space: nowrap;
}

.watermark svg {
  width: 44px;
  height: 30px;
  fill: none;
  stroke: #fff;
  stroke-width: 3;
  filter: drop-shadow(0 0 1px #888);
}

/* Drawing area */
.center {
  flex: 1;
  min-width: 0;
  display: flex;
  flex-direction: column;
}

.upper {
  flex: 1;
  min-height: 0;
  display: flex;
  gap: 3px;
}

.canvas {
  flex: 1;
  min-width: 0;
  height: 100%;
  background: #000;
  fill: none;
}

.leg { stroke: #dbb; stroke-width: 5; stroke-dasharray: 14 2; }
.leg-gap { stroke: #000; stroke-width: 3; }
.leg-core { stroke: #a44; stroke-width: 2; stroke-dasharray: 12 4; }
.brace { stroke: #d99; stroke-width: 2; }
.brace-core { stroke: #644; stroke-width: 1; stroke-dasharray: 3 3; }
.strut { stroke: #daa; stroke-width: 2; }
.outline { stroke: #bbb; stroke-width: 1; }
.joints { stroke: #e94; stroke-width: 2; }
.plates { stroke: #eec; stroke-width: 1; }
.mark-green, .rod { stroke: #0d0; }
.mark-red { stroke: #d00; }
.beam { stroke: #a00; }
.base { stroke: #f00; stroke-width: 2; }
.guide { stroke: #006; }
.ucs-x { stroke: #d00; fill: #d00; }
.ucs-z { stroke: #00c; }
.ucs-o { fill: #080; }

/* Model tree */
.model {
  width: 117px;
  display: flex;
  flex-direction: column;
  border-left: 1px solid #aaa;
}

.tree {
  flex: 1;
  padding-top: 1px;
  background: #fff;
  border-top: 1px solid #aaa;
}

.tree ul {
  list-style: none;
}

.tree li {
  background: linear-gradient(#bbb, #bbb) 5px 0 / 1px 100% no-repeat;
}

.tree li:last-child {
  background-size: 1px 5px;
}

.tree li ul {
  padding-left: 11px;
}

.node {
  display: flex;
  align-items: center;
  height: 9px;
  background: linear-gradient(#bbb, #bbb) 5px 4px / 6px 1px no-repeat;
  white-space: nowrap;
}

.node.root {
  background: none;
}

.node i {
  width: 5px;
  margin: 0 3px;
}

.node svg {
  width: 9px;
  height: 9px;
  margin-right: 3px;
}

.node .current {
  background: #ddd;
}

.tabs {
  display: flex;
  align-items: flex-start;
  height: 12px;
  background: #f6f6f6;
  border-top: 1px solid #555;
  color: #888;
}

.tabs button {
  height: 11px;
  padding: 0 3px;
  white-space: nowrap;
}

.tabs button + button {
  border-left: 1px solid #bbb;
}

.tabs .active {
  color: #111;
  background: #fff;
  border-right: 1px solid #444;
  border-bottom: 1px solid #444;
}

/* Task list */
.tasks {
  margin-top: 4px;
  background: #efefef;
}

.filter {
  display: flex;
  align-items: center;
  gap: 4px;
  height: 17px;
  padding-left: 2px;
}

.select {
  position: relative;
  width: 46px;
  height: 11px;
}

.select::after {
  content: "";
  position: absolute;
  right: 3px;
  top: 5px;
  border: 2px solid transparent;
  border-top-color: #111;
  border-bottom: none;
  pointer-events: none;
}

.select select {
  display: block;
  appearance: none;
  width: 100%;
  height: 11px;
  padding-left: 1px;
  font: inherit;
  border: 1px solid #777;
  border-radius: 0;
  background: linear-gradient(#e4e4e4, #e4e4e4) right / 8px 100% no-repeat #fff;
}

.task-table {
  width: 100%;
  table-layout: fixed;
  border-spacing: 0;
}

.task-table th {
  height: 12px;
  padding-left: 4px;
  font-weight: normal;
  text-align: left;
  border-right: 1px solid #ccc;
  border-bottom: 1px solid #ccc;
}

.task-table th:nth-child(-n+2) {
  width: 22px;
}

.task-table th:last-child {
  width: 8px;
  border-right: none;
}

.task-table td {
  height: 8px;
  background: #fff;
  border-right: 1px solid #eee;
  border-bottom: 1px solid #eee;
}

.task-table .partial td {
  height: 5px;
  border-bottom: none;
}

/* Status bar */
.status {
  display: flex;
  align-items: center;
  gap: 3px;
  height: 11px;
  background: #eee;
  border-bottom: 1px solid #222;
  white-space: nowrap;
  overflow: hidden;
}

.help {
  flex: 1;
}

.coords {
  padding-right: 11px;
  font-family: "Liberation Mono", monospace;
  font-size: 6px;
  color: #666;
}

.dim {
  color: #888;
}

.last {
  width: 11px;
}
```
